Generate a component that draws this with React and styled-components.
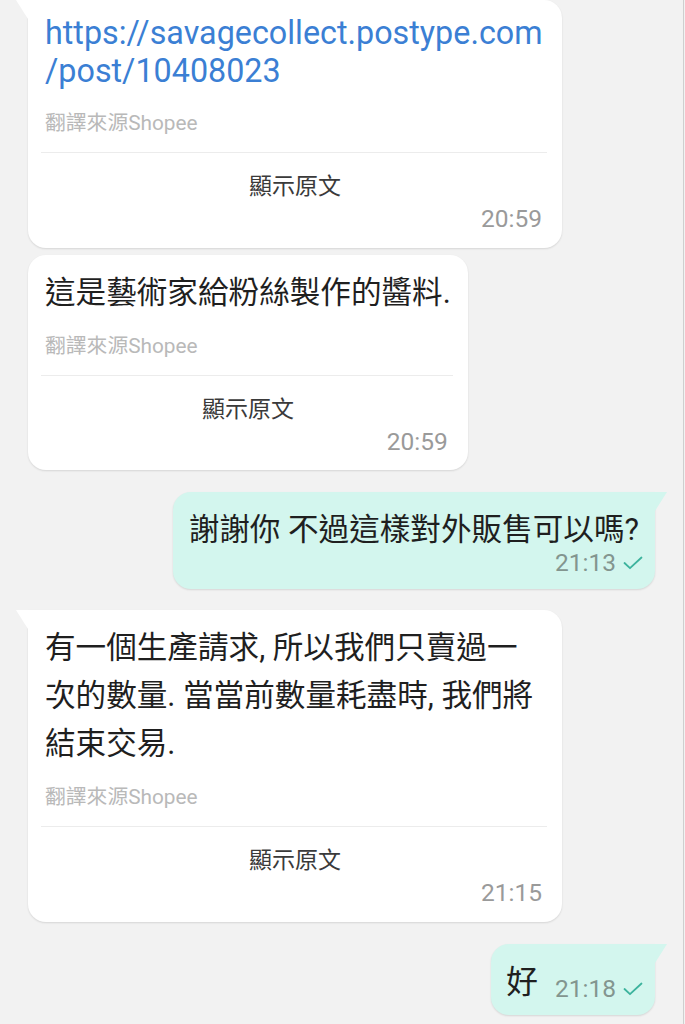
import React from 'react';
import styled, { createGlobalStyle, css } from 'styled-components';

const GlobalStyle = createGlobalStyle`
  html, body {
    margin: 0;
    padding: 0;
    background: #f2f2f2;
  }
  body {
    font-family: Roboto, "Noto Sans CJK TC", sans-serif;
    -webkit-font-smoothing: antialiased;
  }
`;

const messages = [
  {
    id: 1,
    side: 'in',
    tail: true,
    link: true,
    lines: ['https://savagecollect.postype.com', '/post/10408023'],
    time: '20:59',
    wide: true,
  },
  {
    id: 2,
    side: 'in',
    tail: false,
    lines: ['這是藝術家給粉絲製作的醬料.'],
    time: '20:59',
  },
  {
    id: 3,
    side: 'out',
    tail: true,
    lines: ['謝謝你 不過這樣對外販售可以嗎?'],
    time: '21:13',
  },
  {
    id: 4,
    side: 'in',
    tail: true,
    lines: ['有一個生產請求, 所以我們只賣過一', '次的數量. 當當前數量耗盡時, 我們將', '結束交易.'],
    time: '21:15',
    wide: true,
  },
  {
    id: 5,
    side: 'out',
    tail: true,
    inline: true,
    lines: ['好'],
    time: '21:18',
  },
];

const CheckIcon = () => (
  <svg width="20" height="14" viewBox="0 0 20 14" fill="none">
    <path d="M1.5 7 L7 12.2 L18.5 1.5" stroke="#3cb39d" strokeWidth="1.8" strokeLinecap="round" strokeLinejoin="round" />
  </svg>
);

const Message = ({ msg }) => {
  if (msg.side === 'out') {
    return (
      <Row $side="out">
        <Bubble $side="out" $tail={msg.tail} $inline={msg.inline}>
          <Body $inline={msg.inline} $out>{msg.lines.join('')}</Body>
          <Meta $inline={msg.inline} $out>
            <Time $side="out">{msg.time}</Time>
            <CheckIcon />
          </Meta>
        </Bubble>
      </Row>
    );
  }

  return (
    <Row $side="in">
      <Bubble $side="in" $tail={msg.tail} $wide={msg.wide}>
        <Body $link={msg.link}>
          {msg.lines.map((line, i) => (
            <React.Fragment key={i}>
              {i > 0 && <br />}
              {line}
            </React.Fragment>
          ))}
        </Body>
        <Source>翻譯來源Shopee</Source>
        <Divider />
        <ShowOriginal>顯示原文</ShowOriginal>
        <Meta>
          <Time $side="in">{msg.time}</Time>
        </Meta>
      </Bubble>
    </Row>
  );
};

const App = () => (
  <>
    <GlobalStyle />
    <Screen>
      {messages.map((msg) => (
        <Message key={msg.id} msg={msg} />
      ))}
    </Screen>
  </>
);

export default App;

const Screen = styled.div`
  width: 684px;
  min-height: 1024px;
  border-right: 1px solid #cfcfcf;
  display: flex;
  flex-direction: column;
  box-sizing: border-box;
  overflow: hidden;

  & > div + div {
    margin-top: 22px;
  }
  & > div:nth-child(2) {
    margin-top: 7px;
  }
  & > div:nth-child(4) {
    margin-top: 21px;
  }
`;

const Row = styled.div`
  display: flex;
  justify-content: ${(p) => (p.$side === 'out' ? 'flex-end' : 'flex-start')};
  padding: ${(p) => (p.$side === 'out' ? '0 28px 0 0' : '0 0 0 28px')};
`;

const Bubble = styled.div`
  position: relative;
  box-sizing: border-box;
  background: ${(p) => (p.$side === 'out' ? '#d3f6ee' : '#ffffff')};
  border-radius: 18px;
  box-shadow: 0 1px 2px rgba(0, 0, 0, 0.12);
  width: ${(p) => (p.$wide ? '534px' : 'auto')};
  max-width: 534px;

  ${(p) =>
    p.$side === 'in'
      ? css`
          padding: 14px 17px ${p.$wide && !p.$tail ? '14px' : p.$wide ? '15px' : '14px'} 17px;
          ${p.$tail && 'border-top-left-radius: 0;'}
        `
      : css`
          padding: ${p.$inline ? '20px 12px 15px 15px' : '20px 12px 12px 16px'};
          ${p.$inline && 'display: flex; align-items: flex-end; gap: 17px;'}
          ${p.$tail && 'border-top-right-radius: 0;'}
        `}

  ${(p) =>
    p.$tail &&
    css`
      &::before {
        content: '';
        position: absolute;
        top: 0;
        width: 12px;
        height: 19px;
        background: inherit;
        ${p.$side === 'in'
          ? css`
              left: -12px;
              clip-path: polygon(0 0, 100% 0, 100% 100%);
            `
          : css`
              right: -12px;
              clip-path: polygon(0 0, 100% 0, 0 100%);
            `}
      }
    `}
`;

const Body = styled.div`
  font-size: ${(p) => (p.$link ? '32.3px' : p.$inline ? '32px' : '30.6px')};
  line-height: ${(p) => (p.$link ? '38px' : p.$out ? '36px' : '48px')};
  color: ${(p) => (p.$link ? '#3b7fd4' : '#1f1f1f')};
  padding-bottom: ${(p) => (p.$link ? '4px' : '0')};
  margin-right: ${(p) => (p.$out && !p.$inline ? '4px' : '0')};
  white-space: nowrap;
`;

const Source = styled.div`
  margin-top: 16px;
  font-size: 20.8px;
  line-height: 26px;
  color: #b9b9b9;
`;

const Divider = styled.div`
  height: 1px;
  background: #ececec;
  margin: 16px -2px 0 -4px;
`;

const ShowOriginal = styled.div`
  margin-top: 19px;
  text-align: center;
  font-size: 23px;
  line-height: 30px;
  color: #3a3a3a;
`;

const Meta = styled.div`
  display: flex;
  justify-content: flex-end;
  align-items: center;
  gap: ${(p) => (p.$out ? '7px' : '8px')};
  margin-top: ${(p) => (p.$inline ? '0' : p.$out ? '1px' : '3px')};
  margin-bottom: ${(p) => (p.$inline ? '-3px' : '0')};
  padding-right: ${(p) => (p.$out ? '0' : '3px')};
`;

const Time = styled.span`
  font-family: Roboto, sans-serif;
  font-size: 24.5px;
  line-height: 28px;
  color: ${(p) => (p.$side === 'out' ? '#83958f' : '#9a9a9a')};
`;
